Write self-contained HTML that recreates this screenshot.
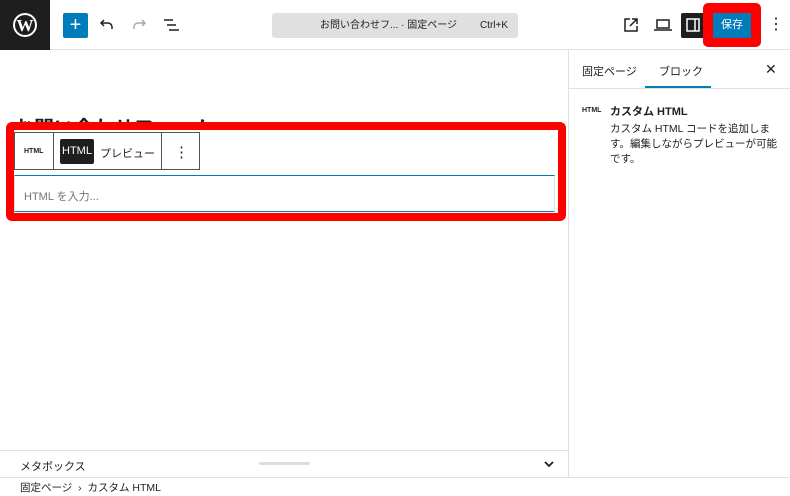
<!DOCTYPE html>
<html><head><meta charset="utf-8"><style>
*{box-sizing:border-box;margin:0;padding:0}
body{width:790px;height:496px;overflow:hidden;background:#fff;font-family:"Liberation Sans","Noto Sans CJK JP",sans-serif;color:#1e1e1e;position:relative;font-size:11px}
.a{position:absolute}
</style></head><body>
<div class="a" style="left:0;top:0;width:790px;height:50px;border-bottom:1px solid #e0e0e0"></div>
<div class="a" style="left:0;top:0;width:50px;height:50px;background:#1e1e1e"></div>
<svg class="a" style="left:12px;top:12px" width="26" height="26" viewBox="0 0 26 26"><circle cx="13" cy="13" r="12" fill="#fff"/><circle cx="13" cy="13" r="10" fill="#1e1e1e"/><text x="13" y="19" font-family="Liberation Serif" font-weight="bold" font-size="17" fill="#fff" text-anchor="middle">W</text></svg>
<div class="a" style="left:63px;top:13px;width:25px;height:25px;background:#007cba;border-radius:2px;color:#fff;font-size:20px;line-height:24px;text-align:center">+</div>
<svg class="a" style="left:98px;top:16px" width="18" height="18" viewBox="0 0 18 18" fill="none" stroke="#1e1e1e" stroke-width="1.5"><path d="M6 4L3 7l3 3M3 7h7a4 4 0 014 4v2"/></svg>
<svg class="a" style="left:130px;top:16px" width="18" height="18" viewBox="0 0 18 18" fill="none" stroke="#aaa" stroke-width="1.5"><path d="M12 4l3 3-3 3M15 7H8a4 4 0 00-4 4v2"/></svg>
<svg class="a" style="left:162px;top:16px" width="18" height="18" viewBox="0 0 18 18" fill="none" stroke="#1e1e1e" stroke-width="1.5"><path d="M2 4h9M5 9h9M7 14h10"/></svg>
<div class="a" style="left:272px;top:13px;width:246px;height:25px;background:#e0e0e0;border-radius:3px;font-size:10px;line-height:25px"><span style="position:absolute;left:48px">お問い合わせフ... · 固定ページ</span><span style="position:absolute;right:10px">Ctrl+K</span></div>
<svg class="a" style="left:622px;top:16px" width="18" height="18" viewBox="0 0 18 18" fill="none" stroke="#1e1e1e" stroke-width="1.5"><path d="M8 3H3v12h12v-5M10 3h5v5M15 3L8 10"/></svg>
<svg class="a" style="left:653px;top:16px" width="20" height="18" viewBox="0 0 20 18" fill="none" stroke="#1e1e1e" stroke-width="1.5"><path d="M4 4h12v8H4zM1 14h18"/></svg>
<div class="a" style="left:681px;top:13px;width:24px;height:25px;background:#1e1e1e;border-radius:2px"></div>
<svg class="a" style="left:685px;top:17px" width="16" height="16" viewBox="0 0 16 16" fill="none" stroke="#fff" stroke-width="1.5"><rect x="2" y="2" width="12" height="12"/><path d="M10 2v12"/></svg>
<div class="a" style="left:703px;top:3px;width:58px;height:44px;background:#f00;border-radius:5px"></div>
<div class="a" style="left:713px;top:13px;width:38px;height:25px;background:#007cba;color:#fff;font-size:11px;line-height:25px;text-align:center">保存</div>
<div class="a" style="left:768px;top:13px;font-size:16px;line-height:24px">⋮</div>
<div class="a" style="left:568px;top:50px;width:1px;height:428px;background:#e0e0e0"></div>
<div class="a" style="left:568px;top:88px;width:222px;height:1px;background:#e0e0e0"></div>
<div class="a" style="left:582px;top:63px;font-size:11px">固定ページ</div>
<div class="a" style="left:659px;top:63px;font-size:11px">ブロック</div>
<div class="a" style="left:645px;top:86px;width:66px;height:2px;background:#007cba"></div>
<div class="a" style="left:765px;top:61px;font-size:14px">✕</div>
<div class="a" style="left:582px;top:107px;font-size:7px;font-weight:bold">HTML</div>
<div class="a" style="left:610px;top:103px;font-size:11px;font-weight:bold">カスタム HTML</div>
<div class="a" style="left:610px;top:122px;width:172px;font-size:10.5px;line-height:15px;color:#1e1e1e">カスタム HTML コードを追加します。編集しながらプレビューが可能です。</div>
<div class="a" style="left:14px;top:112px;font-size:20px;font-weight:bold;clip-path:inset(0 0 55% 0)">お問い合わせフォーム</div>
<div class="a" style="left:6px;top:122px;width:560px;height:99px;border:8px solid #f00;border-radius:6px;background:#fff"></div>
<div class="a" style="left:14px;top:132px;width:186px;height:38px;border:1px solid #555;background:#fff"></div>
<div class="a" style="left:53px;top:132px;width:1px;height:38px;background:#555"></div>
<div class="a" style="left:161px;top:132px;width:1px;height:38px;background:#555"></div>
<div class="a" style="left:24px;top:148px;font-size:7px;font-weight:bold">HTML</div>
<div class="a" style="left:60px;top:139px;width:34px;height:25px;background:#1e1e1e;color:#fff;border-radius:2px;font-size:11px;line-height:25px;text-align:center">HTML</div>
<div class="a" style="left:100px;top:145px;font-size:11px">プレビュー</div>
<div class="a" style="left:174px;top:143px;font-size:15px">⋮</div>
<div class="a" style="left:14px;top:175px;width:541px;height:37px;border-top:1px solid #007cba;border-bottom:1px solid #007cba;border-left:1px solid #ddd;border-right:1px solid #ddd"></div>
<div class="a" style="left:24px;top:188px;font-size:11px;color:#757575">HTML を入力...</div>
<div class="a" style="left:0;top:450px;width:568px;height:1px;background:#e0e0e0"></div>
<div class="a" style="left:20px;top:458px;font-size:11px">メタボックス</div>
<div class="a" style="left:259px;top:462px;width:51px;height:3px;background:#ddd;border-radius:2px"></div>
<svg class="a" style="left:543px;top:459px" width="12" height="10" viewBox="0 0 12 10" fill="none" stroke="#1e1e1e" stroke-width="1.8"><path d="M2 3l4 4 4-4"/></svg>
<div class="a" style="left:0;top:477px;width:790px;height:1px;background:#e0e0e0"></div>
<div class="a" style="left:20px;top:480px;font-size:10.5px">固定ページ &nbsp;›&nbsp; カスタム HTML</div>
</body></html>
